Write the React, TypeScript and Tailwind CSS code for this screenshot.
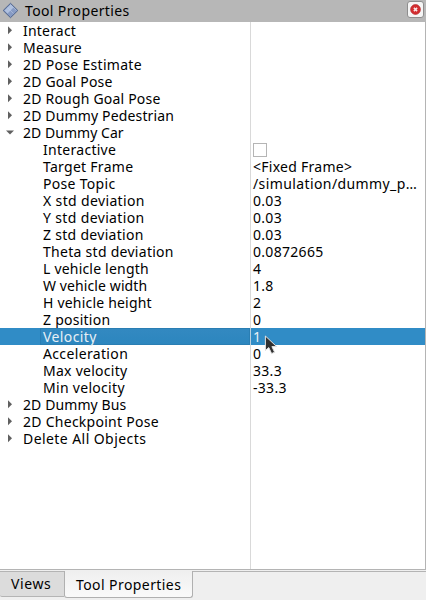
type Row = {
  name: string;
  tracking?: string;
  value?: string;
  valueTracking?: string;
  child?: boolean;
  open?: boolean;
  check?: boolean;
  selected?: boolean;
};

const rows: Row[] = [
  { name: "Interact", tracking: "tracking-[0.2px]" },
  { name: "Measure", tracking: "tracking-[0.25px]" },
  { name: "2D Pose Estimate", tracking: "tracking-[0.3px]" },
  { name: "2D Goal Pose", tracking: "tracking-[0.2px]" },
  { name: "2D Rough Goal Pose", tracking: "tracking-[0.2px]" },
  { name: "2D Dummy Pedestrian", tracking: "tracking-[0.15px]" },
  { name: "2D Dummy Car", tracking: "tracking-[0.04px]", open: true },
  { name: "Interactive", tracking: "tracking-[0.28px]", child: true, check: true },
  { name: "Target Frame", tracking: "tracking-[0.28px]", child: true, value: "<Fixed Frame>", valueTracking: "tracking-[0.27px]" },
  { name: "Pose Topic", tracking: "tracking-[0.3px]", child: true, value: "/simulation/dummy_p…", valueTracking: "tracking-[0.4px]" },
  { name: "X std deviation", tracking: "tracking-[0.36px]", child: true, value: "0.03" },
  { name: "Y std deviation", tracking: "tracking-[0.36px]", child: true, value: "0.03" },
  { name: "Z std deviation", tracking: "tracking-[0.3px]", child: true, value: "0.03" },
  { name: "Theta std deviation", tracking: "tracking-[0.28px]", child: true, value: "0.0872665" },
  { name: "L vehicle length", tracking: "tracking-[0.2px]", child: true, value: "4" },
  { name: "W vehicle width", child: true, value: "1.8" },
  { name: "H vehicle height", tracking: "tracking-[0.2px]", child: true, value: "2" },
  { name: "Z position", tracking: "tracking-[0.25px]", child: true, value: "0" },
  { name: "Velocity", tracking: "tracking-[0.4px]", child: true, value: "1", selected: true },
  { name: "Acceleration", tracking: "tracking-[0.35px]", child: true, value: "0" },
  { name: "Max velocity", tracking: "tracking-[0.27px]", child: true, value: "33.3" },
  { name: "Min velocity", tracking: "tracking-[0.3px]", child: true, value: "-33.3" },
  { name: "2D Dummy Bus" },
  { name: "2D Checkpoint Pose", tracking: "tracking-[0.27px]" },
  { name: "Delete All Objects", tracking: "tracking-[0.43px]" },
];

function Arrow({ open }: { open?: boolean }) {
  return (
    <svg className="ml-[5px] h-[17px] w-[10px] shrink-0" viewBox="0 0 10 17" fill="#606060">
      {open ? <path d="M1 6.5H9L5 10.5Z" /> : <path d="M3 4.2L7 8.2L3 12.2Z" />}
    </svg>
  );
}

function TreeRow({ row }: { row: Row }) {
  const tracking = row.tracking ?? "tracking-[0.1px]";
  return (
    <div className={`relative flex h-[17px] w-full leading-[17px] ${row.selected ? "bg-[#308cc6] text-[#e8f0f6]" : ""}`}>
      <div className="flex w-[250px] shrink-0">
        {row.child ? (
          <span
            className={`ml-[40px] flex-1 pl-[3px] ${tracking} ${row.selected ? "bg-linear-to-b from-[#3389c1] to-[#2c86be] shadow-[inset_0_0_0_1px_#2a7eb3]" : ""}`}
          >
            {row.name}
          </span>
        ) : (
          <>
            <Arrow open={row.open} />
            <span className={`ml-[8px] ${tracking}`}>{row.name}</span>
          </>
        )}
      </div>
      <div
        className={`flex flex-1 border-l pl-[2px] ${row.valueTracking ?? "tracking-[0.3px]"} ${row.selected ? "border-[#b8cfdf]" : "border-[#d9d9d9]"}`}
      >
        {row.check ? <span className="mt-[2px] size-[14px] border border-[#b5b5b5] bg-white" /> : row.value}
      </div>
      {row.selected && (
        <svg className="absolute top-[6px] left-[263px] z-10 h-[24px] w-[16px]" viewBox="0 0 16 24">
          <path d="M2.4 2V16.4L5.8 13.6L8.6 19.6L11.6 18.2L8.9 12.6H13.6Z" fill="#303030" stroke="#e4e4e4" strokeWidth="1" />
        </svg>
      )}
    </div>
  );
}

export default function App() {
  return (
    <div className="flex h-[600px] w-[426px] flex-col overflow-hidden bg-[#efefef] font-['Noto_Sans','Open_Sans',sans-serif] text-[14px] whitespace-nowrap text-black">
      <header className="flex h-[22px] shrink-0 items-center bg-[#b7b7b7] pr-[2px] pl-[2px]">
        <svg className="h-[18px] w-[17px]" viewBox="0 0 17 18">
          <path d="M8.5 1.3L15.8 8.5L8.5 15.7L1.2 8.5Z" fill="#879bc4" stroke="#4d638c" strokeWidth="1" />
          <path d="M8.5 2.5L11.5 5.5L5.5 11.5L2.5 8.5Z" fill="#b0c1df" />
          <path d="M5.5 5.5L11.5 11.5M8.5 2.5L14.5 8.5" stroke="#c2cfe7" strokeWidth=".5" />
        </svg>
        <h1 className="ml-[6px] flex-1 leading-[20px] tracking-[0.37px]">Tool Properties</h1>
        <button aria-label="Close" className="mb-[4px] flex h-[17px] w-[17px] items-center justify-center rounded-[3px] border border-[#8e8e8e] bg-[#f5f5f5]">
          <svg className="size-[11px]" viewBox="0 0 11 11">
            <circle cx="5.5" cy="5.5" r="4.9" fill="#d42d30" stroke="#b5292c" strokeWidth=".7" />
            <path d="M3.9 3.9L7.1 7.1M7.1 3.9L3.9 7.1" stroke="#f8e8e8" strokeWidth="1.5" />
          </svg>
        </button>
      </header>
      <main className="flex h-[548px] shrink-0 flex-col border-r border-b border-[#b4b4b4] bg-white">
        {rows.map((row) => <TreeRow key={row.name} row={row} />)}
        <div className="ml-[250px] flex-1 border-l border-[#d9d9d9]" />
      </main>
      <footer className="mt-[1px] flex flex-1 items-start border-t border-[#b4b4b4]">
        <div className="flex h-[25px] w-[64px] items-center rounded-bl-[2px] border-b border-[#b4b4b4] bg-[#dcdcdc] pb-[2px] pl-[11px] tracking-[0.6px]">Views</div>
        <div className="-mt-px flex h-[27px] w-[129px] items-center rounded-b-[3px] border border-t-0 border-[#b0b0b0] bg-linear-to-b from-[#efefef] to-[#fafafa] pl-[11px] tracking-[0.42px]">Tool Properties</div>
      </footer>
    </div>
  );
}
